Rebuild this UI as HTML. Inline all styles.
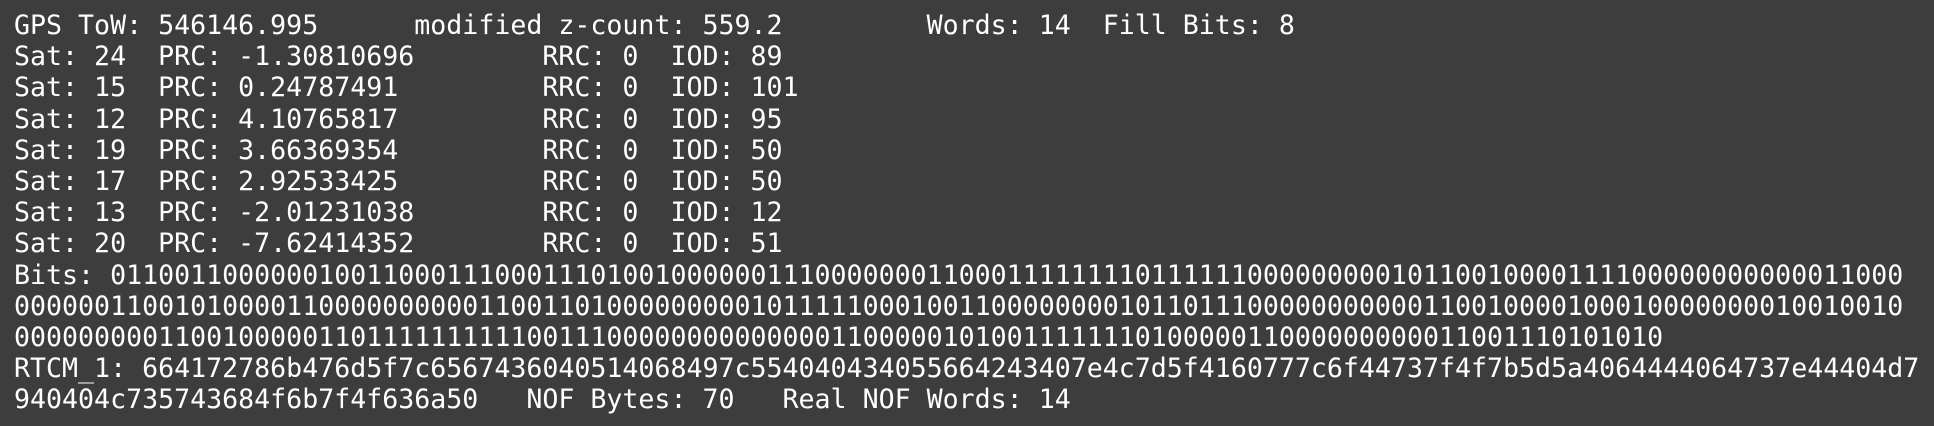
<!DOCTYPE html>
<html><head><meta charset="utf-8"><style>
html,body{margin:0;padding:0;background:#3d3d3d;width:1934px;height:426px;overflow:hidden}
pre{margin:0;position:absolute;left:14px;top:10px;font-family:"DejaVu Sans Mono","Liberation Mono",monospace;font-size:26.6px;line-height:31.2px;color:#ffffff;white-space:pre}
</style></head><body><pre>GPS ToW: 546146.995      modified z-count: 559.2         Words: 14  Fill Bits: 8
Sat: 24  PRC: -1.30810696        RRC: 0  IOD: 89
Sat: 15  PRC: 0.24787491         RRC: 0  IOD: 101
Sat: 12  PRC: 4.10765817         RRC: 0  IOD: 95
Sat: 19  PRC: 3.66369354         RRC: 0  IOD: 50
Sat: 17  PRC: 2.92533425         RRC: 0  IOD: 50
Sat: 13  PRC: -2.01231038        RRC: 0  IOD: 12
Sat: 20  PRC: -7.62414352        RRC: 0  IOD: 51
Bits: 0110011000000100110001110001110100100000011100000001100011111111011111100000000010110010000111100000000000011000
0000001100101000011000000000011001101000000000101111100010011000000001011011100000000000110010000100010000000010010010
0000000001100100000110111111111100111000000000000001100000101001111111010000011000000000011001110101010
RTCM_1: 664172786b476d5f7c6567436040514068497c554040434055664243407e4c7d5f4160777c6f44737f4f7b5d5a4064444064737e44404d7
940404c735743684f6b7f4f636a50   NOF Bytes: 70   Real NOF Words: 14</pre></body></html>
